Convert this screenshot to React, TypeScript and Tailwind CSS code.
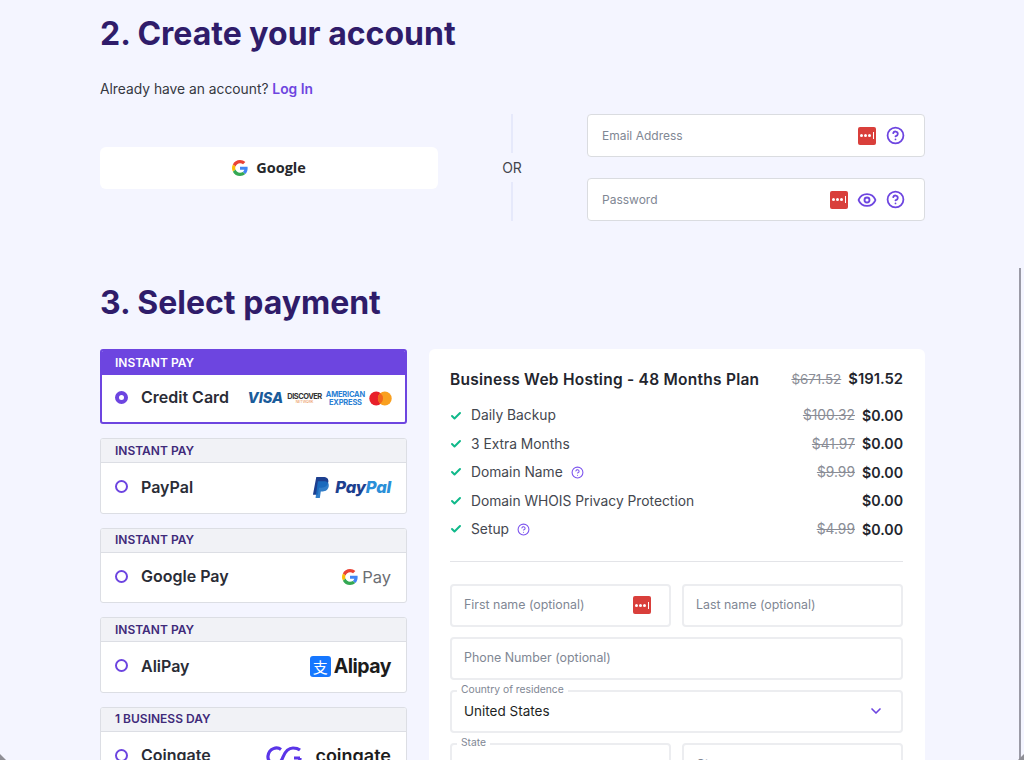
import { Check, ChevronDown, CircleHelp, Eye } from "lucide-react";

const font = "font-['Inter','Noto_Sans',sans-serif]";

function LastPass() {
    return (
        <span className="flex h-[18px] w-[18px] shrink-0 items-center justify-center gap-[1.5px] rounded-[2px] bg-[#d93f3b]">
            <span className="h-[2.5px] w-[2.5px] rounded-full bg-white" />
            <span className="h-[2.5px] w-[2.5px] rounded-full bg-white" />
            <span className="h-[2.5px] w-[2.5px] rounded-full bg-white" />
            <span className="ml-[1px] h-[7px] w-[1px] bg-white" />
        </span>
    );
}

function GoogleG({ size = 16 }: { size?: number }) {
    return (
        <svg width={size} height={size} viewBox="0 0 48 48">
            <path fill="#EA4335" d="M24 9.5c3.5 0 6.7 1.2 9.2 3.6l6.9-6.9C35.9 2.4 30.5 0 24 0 14.6 0 6.5 5.4 2.6 13.2l8 6.2C12.5 13.6 17.8 9.5 24 9.5z" />
            <path fill="#4285F4" d="M46.9 24.5c0-1.6-.1-3.1-.4-4.5H24v9h12.9c-.6 3-2.2 5.500-4.700 7.200l7.700 6C44.400 37.600 46.900 31.600 46.900 24.500z" />
            <path fill="#FBBC05" d="M10.500 28.600c-.5-1.400-.8-3-.8-4.600s.3-3.200.8-4.600l-8-6.200C.9 16.500 0 20.100 0 24s.9 7.500 2.600 10.800l7.900-6.200z" />
            <path fill="#34A853" d="M24 48c6.500 0 11.900-2.100 15.900-5.800l-7.700-6c-2.100 1.400-4.900 2.300-8.200 2.300-6.200 0-11.500-4.200-13.400-9.800l-8 6.200C6.500 42.600 14.600 48 24 48z" />
        </svg>
    );
}

function TextField({ label, children }: { label: string; children?: React.ReactNode }) {
    return (
        <div className="flex h-[43px] items-center justify-between rounded-[4px] border border-[#dadce0] bg-white pl-[14px] pr-[19px]">
            <span className="text-[12px] text-[#7f8794]">{label}</span>
            {children && <span className="flex items-center gap-[9px]">{children}</span>}
        </div>
    );
}

function Help() {
    return <CircleHelp size={19} strokeWidth={2.25} className="text-[#6d45e0]" />;
}

function PayCard({ tag, name, active, children }: { tag: string; name: string; active?: boolean; children?: React.ReactNode }) {
    return (
        <div className={`flex w-[307px] flex-col overflow-hidden rounded-[3px] border bg-white ${active ? "h-[75px] border-2 border-[#6d45e0]" : "h-[75.5px] border-[#dcdee4]"}`}>
            <div className={`flex h-[24px] shrink-0 items-center border-b text-[12px] font-semibold ${active ? "border-[#6d45e0] bg-[#6d45e0] pl-[13px] text-white" : "border-[#dcdee4] bg-[#f1f2f6] pl-[14px] text-[#3f2a7a]"}`}>
                {tag}
            </div>
            <div className={`flex flex-1 items-center justify-between ${active ? "pl-[13px] pr-[13px]" : "pl-[14px] pr-[15px]"}`}>
                <div className={`flex items-center gap-[13px] ${active ? "pb-[3px]" : "pb-[2px]"}`}>
                    <span className={`h-[13px] w-[13px] rounded-full ${active ? "border-[4px]" : "border-2"} border-[#6d45e0]`} />
                    <span className="text-[16px] font-semibold text-[#2a2c36]">{name}</span>
                </div>
                {children}
            </div>
        </div>
    );
}

function CardLogos() {
    return (
        <div className="flex items-center gap-[4px]">
            <span className="text-[14.5px] font-extrabold italic leading-none text-[#1a5b9a]">VISA</span>
            <span className="flex flex-col items-center leading-none">
                <span className="text-[7.5px] font-bold tracking-[-0.5px] text-[#333]">DISCOVER</span>
                <span className="text-[3.5px] text-[#e8833a]">NETWORK</span>
            </span>
            <span className="flex flex-col items-center text-[7.5px] font-bold leading-[8px] tracking-[-0.2px] text-[#2a7fd4]">
                <span>AMERICAN</span>
                <span>EXPRESS</span>
            </span>
            <svg width="23" height="15" viewBox="0 0 24 15">
                <circle cx="7.500" cy="7.500" r="7.200" fill="#e8202a" />
                <circle cx="16.500" cy="7.500" r="7.200" fill="#f9a01f" />
                <path d="M12 1.900a7.200 7.200 0 0 1 0 11.200a7.200 7.200 0 0 1 0-11.200z" fill="#f2661d" />
            </svg>
        </div>
    );
}

function PayPalLogo() {
    return (
        <div className="flex items-center gap-[5px]">
            <svg width="18" height="21" viewBox="0 0 17 20">
                <path d="M4 0h6.500c3.500 0 5.500 1.800 5 4.800-.6 3.600-3 5.400-6.300 5.400H6.600L5.500 17H.8z" fill="#1d3f8f" />
                <path d="M5.500 4h6c2.800 0 4.700 1.400 4.400 4.500-.4 3.300-2.700 5.200-5.800 5.200H8.300L7.400 20H3.300z" fill="#1b6fc2" opacity="0.9" />
            </svg>
            <span className="text-[16.5px] font-extrabold italic tracking-[-0.2px]">
                <span className="text-[#1d3f8f]">Pay</span>
                <span className="text-[#2a8fd8]">Pal</span>
            </span>
        </div>
    );
}

function Alipay() {
    return (
        <div className="flex items-center gap-[3px]">
            <span className="flex h-[21px] w-[21px] items-center justify-center rounded-[3px] bg-[#1677ff] font-['Noto_Sans_CJK_SC',sans-serif] text-[15px] leading-none text-white">支</span>
            <span className="text-[19.5px] font-bold leading-none tracking-[-0.5px] text-[#1c1c1c]">Alipay</span>
        </div>
    );
}

function Coingate() {
    return (
        <div className="flex items-center gap-[11px]">
            <svg width="38" height="20" viewBox="0 0 38 20" fill="none" stroke="#5a35e8" strokeWidth="3.200">
                <path d="M15 3.500C11 0.500 3 2 2 10c-.6 5 4 8 8 8 3 0 5-2 7-7 2-5 5-9 10-9 3 0 5 .5 7 2" />
                <path d="M34 12h-6M34 12c0 4-2 6-6 6-3 0-5-1-6-3" />
            </svg>
            <span className="text-[18px] font-semibold leading-none text-[#1c1c1c]">coingate</span>
        </div>
    );
}

const rows = [
    { name: "Daily Backup", old: "$100.32" },
    { name: "3 Extra Months", old: "$41.97" },
    { name: "Domain Name", old: "$9.99", help: true },
    { name: "Domain WHOIS Privacy Protection" },
    { name: "Setup", old: "$4.99", help: true },
];

function OrderRow({ name, old, help }: { name: string; old?: string; help?: boolean }) {
    return (
        <div className="flex h-[28.4px] items-center justify-between text-[13.8px]">
            <div className="flex items-center">
                <Check size={12} strokeWidth={4} className="mr-[9px] text-[#10b98a]" />
                <span className="text-[#44474f]">{name}</span>
                {help && <CircleHelp size={13} strokeWidth={2} className="ml-[8px] text-[#7d55ee]" />}
            </div>
            <div className="flex items-center gap-[7px]">
                {old && <span className="text-[#8a8d96] line-through">{old}</span>}
                <span className="text-[14.2px] font-semibold text-[#23252d]">$0.00</span>
            </div>
        </div>
    );
}

function FloatLabel({ text }: { text: string }) {
    return <span className="absolute -top-[8px] left-[5px] bg-white px-[4px] text-[10.3px] leading-[11px] text-[#7f8794]">{text}</span>;
}

const box = "h-[43px] rounded-[4px] border-2 border-[#ecedf0] pl-[12px]";

export default function App() {
    return (
        <div className={`relative h-[760px] overflow-hidden bg-[#f4f5ff] pl-[100px] ${font}`}>
            <h2 className="pt-[13px] text-[32px] font-bold leading-[42px] text-[#2f1c6a]">2. Create your account</h2>
            <p className="mt-[24px] text-[13.8px] leading-[20px] text-[#36383f]">
                Already have an account? <span className="font-semibold text-[#6d45e0]">Log In</span>
            </p>

            <div className="mt-[15px] flex w-[825px] items-center">
                <div className="flex h-[42px] w-[338px] items-center justify-center gap-[8px] rounded-[6px] bg-white">
                    <GoogleG size={16} />
                    <span className="pt-[1px] font-['Open_Sans',sans-serif] text-[14.5px] font-bold text-[#26272b]">Google</span>
                </div>
                <div className="mr-[1px] flex w-[148px] flex-col items-center">
                    <span className="h-[39px] w-[2px] bg-[#e6e9fb]" />
                    <span className="py-[5px] text-[14px] leading-[19px] text-[#44464d]">OR</span>
                    <span className="h-[39px] w-[2px] bg-[#e6e9fb]" />
                </div>
                <div className="flex w-[338px] flex-col gap-[21px]">
                    <TextField label="Email Address">
                        <LastPass />
                        <span className="ml-[1px]">
                            <Help />
                        </span>
                    </TextField>
                    <TextField label="Password">
                        <LastPass />
                        <Eye size={20} strokeWidth={2.25} className="text-[#6d45e0]" />
                        <Help />
                    </TextField>
                </div>
            </div>

            <h2 className="mt-[61px] text-[32px] font-bold leading-[42px] text-[#2f1c6a]">3. Select payment</h2>

            <div className="mt-[25px] flex w-[825px] items-start gap-[22px]">
                <div className="flex flex-col gap-[14px]">
                    <PayCard tag="INSTANT PAY" name="Credit Card" active>
                        <CardLogos />
                    </PayCard>
                    <PayCard tag="INSTANT PAY" name="PayPal">
                        <PayPalLogo />
                    </PayCard>
                    <PayCard tag="INSTANT PAY" name="Google Pay">
                        <div className="flex items-center gap-[4px]">
                            <GoogleG size={16} />
                            <span className="text-[16.5px] leading-none text-[#6b6e73]">Pay</span>
                        </div>
                    </PayCard>
                    <PayCard tag="INSTANT PAY" name="AliPay">
                        <Alipay />
                    </PayCard>
                    <PayCard tag="1 BUSINESS DAY" name="Coingate">
                        <Coingate />
                    </PayCard>
                </div>

                <div className="h-[460px] w-[496px] rounded-[6px] bg-white pl-[21px] pr-[22px] pt-[21px]">
                    <div className="flex items-center justify-between pb-[12.5px] text-[14.8px] font-semibold leading-[19px] text-[#23252d]">
                        <span className="text-[15.5px] tracking-[0.25px]">Business Web Hosting - 48 Months Plan</span>
                        <span className="flex items-center gap-[7px]">
                            <span className="text-[13.4px] font-normal text-[#8a8d96] line-through">$671.52</span>
                            <span>$191.52</span>
                        </span>
                    </div>
                    <div>
                        {rows.map((r) => (
                            <OrderRow key={r.name} {...r} />
                        ))}
                    </div>
                    <div className="mt-[17.5px] border-t border-[#e3e4e8]" />

                    <div className="mt-[22px] flex flex-col gap-[10px]">
                        <div className="grid grid-cols-2 gap-[11px]">
                            <div className={`${box} flex items-center justify-between pr-[18px]`}>
                                <span className="text-[12.4px] text-[#7f8794]">First name (optional)</span>
                                <LastPass />
                            </div>
                            <div className={`${box} flex items-center`}>
                                <span className="text-[12.4px] text-[#7f8794]">Last name (optional)</span>
                            </div>
                        </div>
                        <div className={`${box} flex items-center`}>
                            <span className="text-[12.4px] text-[#7f8794]">Phone Number (optional)</span>
                        </div>
                        <div className={`${box} relative flex items-center justify-between pr-[17px]`}>
                            <FloatLabel text="Country of residence" />
                            <span className="text-[13.5px] text-[#1d1f24]">United States</span>
                            <ChevronDown size={16} strokeWidth={2.5} className="text-[#6d45e0]" />
                        </div>
                        <div className="grid grid-cols-2 gap-[11px]">
                            <div className={`${box} relative flex items-center`}>
                                <FloatLabel text="State" />
                                <span className="pt-[3px] text-[13.5px] text-[#1d1f24]">Alabama</span>
                            </div>
                            <div className={`${box} flex items-center`}>
                                <span className="pt-[1px] text-[12.4px] text-[#7f8794]">City</span>
                            </div>
                        </div>
                    </div>
                </div>
            </div>

            {/* page scrollbar and window corners sit over the page */}
            <div className="absolute right-[3px] top-[268px] h-[492px] w-[2px] bg-[#9a9aa6]" />
            <div className="absolute bottom-0 left-0 h-[6px] w-[6px] bg-[#8f8f96] [clip-path:polygon(0_0,100%_100%,0_100%)]" />
            <div className="absolute bottom-0 right-0 h-[6px] w-[6px] bg-[#8f8f96] [clip-path:polygon(100%_0,100%_100%,0_100%)]" />
        </div>
    );
}
